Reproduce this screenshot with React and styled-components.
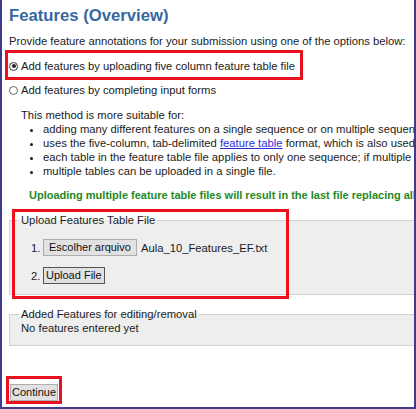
import React from 'react';
import styled, { createGlobalStyle } from 'styled-components';

const GlobalStyle = createGlobalStyle`
    html, body {
        margin: 0;
        padding: 0;
        background: #ffffff;
        overflow: hidden;
    }
    body {
        font-family: 'Liberation Sans', Arial, sans-serif;
        color: #1b1b1b;
    }
`;

const Frame = styled.div`
    position: relative;
    width: 416px;
    height: 409px;
    box-sizing: border-box;
    border: 2px solid #3d3b8d;
    border-top: none;
    overflow: hidden;
    padding-left: 7px;
`;

const Content = styled.div`
    width: 800px;
    white-space: nowrap;
    font-size: 11.25px;
    line-height: 14px;
`;

const Title = styled.h1`
    margin: 6px 0 0;
    font-size: 16.7px;
    line-height: 20px;
    font-weight: bold;
    color: #37689f;
`;

const Intro = styled.p`
    margin: 8px 0 0;
`;

const Option = styled.label`
    display: flex;
    align-items: center;
    gap: 3px;
    margin-top: ${p => p.$gap}px;
`;

const Radio = styled.span`
    position: relative;
    width: 9px;
    height: 9px;
    box-sizing: border-box;
    border-radius: 50%;
    border: 1px solid ${p => (p.$checked ? '#333' : '#666')};
    background: #fff;

    &::after {
        content: '';
        display: ${p => (p.$checked ? 'block' : 'none')};
        position: absolute;
        left: 1.5px;
        top: 1.5px;
        width: 4px;
        height: 4px;
        border-radius: 50%;
        background: #222;
    }
`;

const Method = styled.div`
    margin-top: 11px;
    padding-left: 12px;
`;

const Bullets = styled.ul`
    margin: 0;
    padding-left: 22px;
    list-style: disc;
`;

const DocLink = styled.a`
    color: #2b2bd6;
    text-decoration: underline;
`;

const Warning = styled.p`
    margin: 10px 0 0;
    padding-left: 20px;
    font-size: 11px;
    font-weight: bold;
    color: #238a23;
`;

const Group = styled.fieldset`
    margin: ${p => p.$top}px 0 0;
    width: 760px;
    box-sizing: border-box;
    border: 1px solid #d2d2d2;
    background: #eeeeee;
    padding: 0 9px 10px;
`;

const Legend = styled.legend`
    padding: 0 2px;
    line-height: 14px;
`;

const Step = styled.div`
    display: flex;
    align-items: center;
    padding-left: 12px;
    margin-top: ${p => p.$gap}px;
`;

const StepNo = styled.span`
    width: 12px;
`;

const Button = styled.button`
    font-family: 'Liberation Sans', Arial, sans-serif;
    font-size: 11px;
    line-height: 13px;
    height: 17px;
    padding: 0 ${p => p.$pad}px;
    margin: 0;
    color: #111;
    background: #e1e1e1;
    border: 1px solid ${p => (p.$dark ? '#555' : '#adadad')};
    border-radius: 0;
`;

const FileName = styled.span`
    margin-left: 4px;
`;

const Empty = styled.div`
    padding-left: 2px;
`;

const Continue = styled(Button)`
    margin: 38px 0 0 1px;
`;

const Highlight = styled.div`
    position: absolute;
    box-sizing: border-box;
    border: 3px solid #e8111d;
    pointer-events: none;
`;

export default function App() {
    return (
        <>
            <GlobalStyle />
            <Frame>
                <Content>
                    <Title>Features (Overview)</Title>
                    <Intro>Provide feature annotations for your submission using one of the options below:</Intro>

                    <Option $gap={11}>
                        <Radio $checked />
                        Add features by uploading five column feature table file
                    </Option>
                    <Option $gap={10}>
                        <Radio />
                        Add features by completing input forms
                    </Option>

                    <Method>
                        <div>This method is more suitable for:</div>
                        <Bullets>
                            <li>adding many different features on a single sequence or on multiple sequences</li>
                            <li>uses the five-column, tab-delimited <DocLink href="#">feature table</DocLink> format, which is also used by other submission tools</li>
                            <li>each table in the feature table file applies to only one sequence; if multiple sequences are annotated</li>
                            <li>multiple tables can be uploaded in a single file.</li>
                        </Bullets>
                    </Method>

                    <Warning>Uploading multiple feature table files will result in the last file replacing all previous ones</Warning>

                    <Group $top={11}>
                        <Legend>Upload Features Table File</Legend>
                        <Step $gap={12}>
                            <StepNo>1.</StepNo>
                            <Button $pad={5}>Escolher arquivo</Button>
                            <FileName>Aula_10_Features_EF.txt</FileName>
                        </Step>
                        <Step $gap={11}>
                            <StepNo>2.</StepNo>
                            <Button $dark $pad={2}>Upload File</Button>
                        </Step>
                    </Group>

                    <Group $top={12}>
                        <Legend>Added Features for editing/removal</Legend>
                        <Empty>No features entered yet</Empty>
                    </Group>

                    <Continue $pad={1}>Continue</Continue>
                </Content>

                <Highlight style={{ left: 3, top: 50, width: 298, height: 30 }} />
                <Highlight style={{ left: 10, top: 209, width: 277, height: 90 }} />
                <Highlight style={{ left: 4, top: 376, width: 56, height: 28 }} />
            </Frame>
        </>
    );
}
